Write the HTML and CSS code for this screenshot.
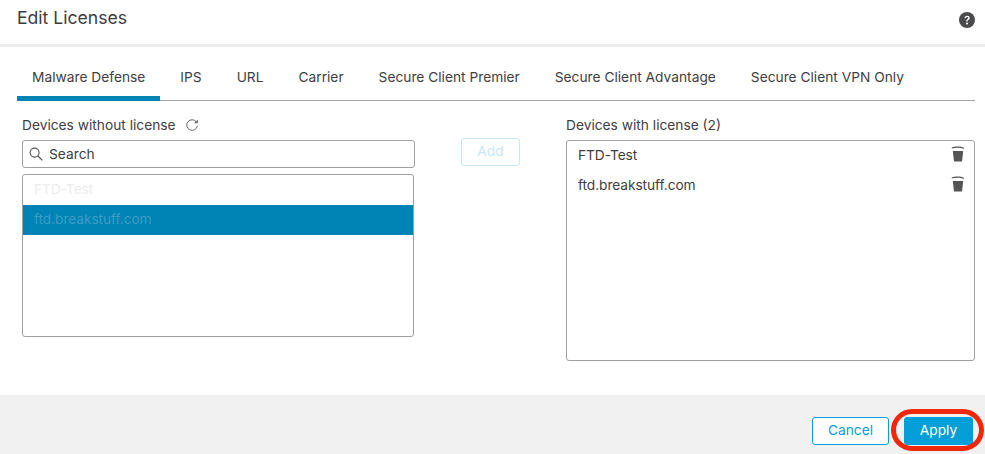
FILE: index.html
```html
<!DOCTYPE html>
<html lang="en">
<head>
<meta charset="utf-8">
<title>Edit Licenses</title>
<link rel="stylesheet" href="styles.css">
</head>
<body>
<div class="dialog">
  <header class="header">
    <h1 class="title">Edit Licenses</h1>
    <svg class="help" viewBox="0 0 16 16" aria-hidden="true"><circle cx="8" cy="8" r="8" fill="#4a4a4c"/><path d="M5.400 6.200C5.500 4.600 6.600 3.700 8.100 3.700c1.500 0 2.600.9 2.600 2.200 0 1-.5 1.500-1.300 2.100-.6.4-.8.7-.8 1.400H7.200c0-1.100.3-1.600 1-2.200.6-.4.9-.7.9-1.200 0-.6-.4-.9-1-.9-.7 0-1.100.4-1.200 1.100z" fill="#fff"/><circle cx="8" cy="11.600" r="1" fill="#fff"/></svg>
  </header>
  <main class="content">
    <nav class="tabs">
      <span class="tab tab-active">Malware Defense</span>
      <span class="tab">IPS</span>
      <span class="tab">URL</span>
      <span class="tab">Carrier</span>
      <span class="tab">Secure Client Premier</span>
      <span class="tab">Secure Client Advantage</span>
      <span class="tab">Secure Client VPN Only</span>
    </nav>
    <div class="panels">
      <section class="panel-left">
        <div class="label">Devices without license
          <svg class="refresh" viewBox="0 0 14 14" aria-hidden="true"><path d="M11.400 4A5.300 5.300 0 1 0 12.300 8" fill="none" stroke="#666" stroke-width="1"/><path d="M12.800 1.600v3.600H9.200z" fill="#666"/></svg>
        </div>
        <div class="search">
          <svg class="search-icon" viewBox="0 0 14 14" aria-hidden="true"><circle cx="5.600" cy="5.600" r="4.500" fill="none" stroke="#555" stroke-width="1.100"/><path d="M9 9l4.300 4.300" stroke="#555" stroke-width="1.200"/></svg>
          <span>Search</span>
        </div>
        <ul class="available">
          <li class="available-row faded">FTD-Test</li>
          <li class="available-row selected">ftd.breakstuff.com</li>
        </ul>
      </section>
      <div class="add-col"><button class="btn-add" type="button">Add</button></div>
      <section class="panel-right">
        <div class="label">Devices with license (2)</div>
        <ul class="licensed">
          <li class="licensed-row"><span class="device-name">FTD-Test</span>
            <svg class="trash" viewBox="0 0 14 16" aria-hidden="true"><path d="M.8 1.600C4 .2 10 .2 13.200 2l-.2.8C9.500 1.400 4.500 1.300.8 2.400z" fill="#555"/><path d="M1.800 5h10.400L11 15.400H3z" fill="#555"/></svg>
          </li>
          <li class="licensed-row"><span class="device-name">ftd.breakstuff.com</span>
            <svg class="trash" viewBox="0 0 14 16" aria-hidden="true"><path d="M.8 1.600C4 .2 10 .2 13.200 2l-.2.8C9.500 1.400 4.500 1.300.8 2.400z" fill="#555"/><path d="M1.800 5h10.400L11 15.400H3z" fill="#555"/></svg>
          </li>
        </ul>
      </section>
    </div>
  </main>
  <footer class="footer">
    <button class="btn btn-cancel" type="button">Cancel</button>
    <button class="btn btn-apply" type="button">Apply</button>
    <span class="callout"></span>
  </footer>
</div>
</body>
</html>
```
FILE: styles.css
```css
* { box-sizing: border-box; }
html, body { margin: 0; padding: 0; }
body {
  width: 985px;
  height: 454px;
  overflow: hidden;
  background: #fff;
  font-family: Inter, "Liberation Sans", sans-serif;
  font-size: 13.75px;
  color: #3f4042;
}
.dialog { display: flex; flex-direction: column; height: 454px; }
.header {
  height: 47px;
  flex: none;
  display: flex;
  align-items: flex-start;
  justify-content: space-between;
  padding: 9px 10px 0 17px;
  border-bottom: 3px solid #ededed;
}
.title { margin: 0; font-size: 17.6px; font-weight: 400; line-height: 18px; color: #3b3c3e; }
.help { width: 16px; height: 16px; margin-top: 3px; }
.content { flex: 1; padding: 20px 10px 0 17px; display: flex; flex-direction: column; }
.tabs {
  height: 34px;
  flex: none;
  display: flex;
  border-bottom: 1px solid #a0a0a0;
}
.tab { padding: 0 15px; margin-right: 5px; line-height: 20px; white-space: nowrap; }
.tab-active { height: 34px; border-bottom: 5px solid #0083b5; }
.panels { display: flex; padding: 15px 0 0 5px; flex: 1; }
.panel-left { width: 393px; flex: none; }
.label { height: 18px; line-height: 18px; display: flex; align-items: center; gap: 9px; }
.refresh { width: 14px; height: 14px; }
.search {
  height: 28px;
  margin: 6px 0;
  border: 1px solid #a0a0a0;
  border-radius: 3px;
  display: flex;
  align-items: center;
  gap: 6px;
  padding-left: 6px;
}
.search-icon { width: 14px; height: 14px; }
.available {
  width: 392px;
  height: 163px;
  margin: 0;
  padding: 0;
  list-style: none;
  border: 1px solid #a0a0a0;
  border-radius: 3px;
}
.available-row { height: 30px; line-height: 28px; padding-left: 11px; letter-spacing: -0.08px; }
.faded { color: #ececec; }
.selected { background: #0083b5; color: #3a9dc4; }
.add-col { width: 151px; flex: none; padding: 22px 0 0 46px; }
.btn-add {
  width: 59px;
  height: 28px;
  padding: 0 0 2px;
  background: #fff;
  border: 1px solid #c5e8f7;
  border-radius: 3px;
  color: #c5e8f7;
  font: inherit;
}
.panel-right { width: 409px; flex: none; }
.licensed {
  height: 221px;
  margin: 6px 0 0;
  padding: 0;
  list-style: none;
  border: 1px solid #a0a0a0;
  border-radius: 3px;
}
.licensed-row {
  height: 30px;
  display: flex;
  align-items: flex-start;
  justify-content: space-between;
  padding: 5px 9px 0 11px;
}
.device-name { line-height: 18px; letter-spacing: -0.08px; }
.trash { width: 14px; height: 16px; }
.footer {
  height: 59px;
  flex: none;
  position: relative;
  background: #f1f1f1;
  display: flex;
  justify-content: flex-end;
  align-items: flex-start;
  gap: 15px;
  padding: 22px 12px 0 0;
}
.btn { height: 28px; padding: 0 0 2px; border-radius: 3px; font: inherit; }
.btn-cancel { width: 77px; background: #fff; border: 1px solid #049fd9; color: #049fd9; }
.btn-apply { width: 69px; background: #049fd9; border: 1px solid #049fd9; color: #fff; }
.callout {
  position: absolute;
  left: 891px;
  top: 14px;
  width: 93px;
  height: 42px;
  border: 5px solid #f0280a;
  border-radius: 21px;
}
```
